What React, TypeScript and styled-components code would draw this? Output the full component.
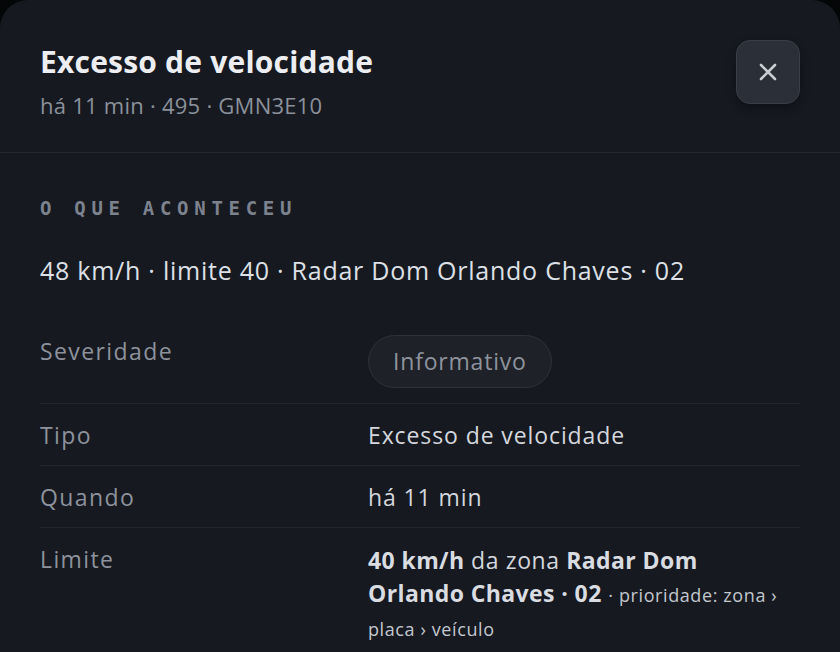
import React from "react";
import styled, { createGlobalStyle } from "styled-components";

const GlobalStyle = createGlobalStyle`
  * {
    box-sizing: border-box;
  }
  html,
  body {
    margin: 0;
    padding: 0;
    background: #050608;
    font-family: "Open Sans", Lato, sans-serif;
  }
`;

const Sheet = styled.div`
  min-height: 100vh;
  background-color: #161920;
  border-radius: 28px 28px 0 0;
  overflow: hidden;
`;

const Header = styled.header`
  display: flex;
  justify-content: space-between;
  align-items: flex-start;
  height: 153px;
  padding: 40px 40px 0 40px;
  border-bottom: 1px solid #252830;
`;

const TitleBlock = styled.div`
  padding-top: 4px;
`;

const Title = styled.h1`
  margin: 0;
  font-size: 30px;
  line-height: 36px;
  font-weight: 700;
  color: #eceef2;
  letter-spacing: 0.2px;
`;

const Subtitle = styled.div`
  margin-top: 10px;
  font-size: 22px;
  line-height: 30px;
  color: #8b919b;
  letter-spacing: 0.25px;
`;

const CloseButton = styled.button`
  width: 64px;
  height: 64px;
  display: flex;
  align-items: center;
  justify-content: center;
  background-color: #2a2f38;
  border: 1.5px solid #3a3f49;
  border-radius: 14px;
  box-shadow: 0 4px 10px rgba(0, 0, 0, 0.35);
  color: #c9cdd4;
  cursor: pointer;
  padding: 0;
`;

const Content = styled.main`
  padding: 43px 40px 0 40px;
`;

const SectionLabel = styled.h2`
  margin: 0;
  font-family: "DejaVu Sans Mono", "Liberation Mono", monospace;
  font-size: 19px;
  line-height: 24px;
  font-weight: 700;
  letter-spacing: 5.7px;
  color: #7d838e;
`;

const Summary = styled.p`
  margin: 33px 0 0 0;
  font-size: 25px;
  line-height: 34px;
  color: #dde0e6;
  letter-spacing: 0.75px;
`;

const Rows = styled.div`
  margin-top: 32px;
`;

const Row = styled.div<{ $last?: boolean }>`
  display: grid;
  grid-template-columns: 328px 1fr;
  align-items: start;
  padding: 16px 0 15px 0;
  border-bottom: ${(p) => (p.$last ? "none" : "1px solid #22252c")};
`;

const Label = styled.div<{ $offset?: number }>`
  font-size: 23px;
  line-height: 30px;
  color: #8d929c;
  letter-spacing: 1.4px;
  padding-top: ${(p) => p.$offset ?? 0}px;
`;

const Value = styled.div`
  font-size: 23px;
  line-height: 30px;
  color: #d4d7dd;
  letter-spacing: 0.9px;
`;

const RichValue = styled(Value)`
  line-height: 32.5px;
  letter-spacing: 0.6px;
`;

const Strong = styled.strong`
  font-weight: 700;
  color: #d9dce1;
  letter-spacing: 0.4px;
`;

const Small = styled.span`
  font-size: 18px;
  color: #c3c7ce;
  letter-spacing: 0.6px;
`;

const Pill = styled.span`
  display: inline-block;
  padding: 10px 24px;
  line-height: 31px;
  font-size: 23px;
  color: #8e939d;
  letter-spacing: 0.8px;
  background-color: #1e2128;
  border: 1.5px solid #2e3139;
  border-radius: 999px;
`;

const CloseIcon = () => (
  <svg width="18" height="18" viewBox="0 0 18 18" fill="none">
    <path
      d="M2 2L16 16M16 2L2 16"
      stroke="currentColor"
      strokeWidth="2.6"
      strokeLinecap="round"
    />
  </svg>
);

const App = () => {
  return (
    <>
      <GlobalStyle />
      <Sheet>
        <Header>
          <TitleBlock>
            <Title>Excesso de velocidade</Title>
            <Subtitle>há 11 min · 495 · GMN3E10</Subtitle>
          </TitleBlock>
          <CloseButton aria-label="Fechar">
            <CloseIcon />
          </CloseButton>
        </Header>
        <Content>
          <SectionLabel>O QUE ACONTECEU</SectionLabel>
          <Summary>48 km/h · limite 40 · Radar Dom Orlando Chaves · 02</Summary>
          <Rows>
            <Row>
              <Label $offset={1}>Severidade</Label>
              <div>
                <Pill>Informativo</Pill>
              </div>
            </Row>
            <Row>
              <Label>Tipo</Label>
              <Value>Excesso de velocidade</Value>
            </Row>
            <Row>
              <Label>Quando</Label>
              <Value>há 11 min</Value>
            </Row>
            <Row $last>
              <Label>Limite</Label>
              <RichValue>
                <Strong>40 km/h</Strong> da zona{" "}
                <Strong>Radar Dom Orlando Chaves · 02</Strong>{" "}
                <Small>· prioridade: zona › placa › veículo</Small>
              </RichValue>
            </Row>
          </Rows>
        </Content>
      </Sheet>
    </>
  );
};

export default App;
